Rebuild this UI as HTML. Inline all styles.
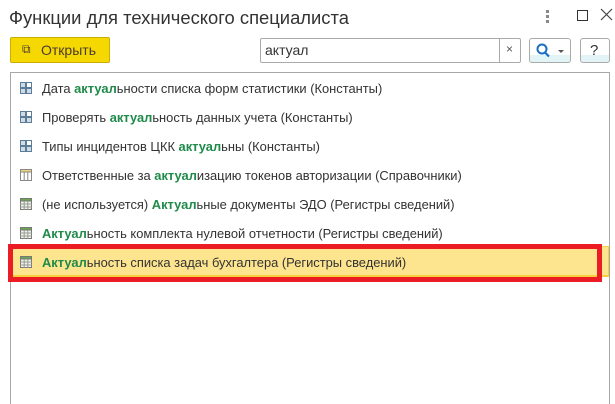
<!DOCTYPE html>
<html><head><meta charset="utf-8"><style>
html,body{margin:0;width:615px;height:404px;overflow:hidden}
body{background:#fff;font-family:"Liberation Sans",sans-serif;position:relative;color:#333}
.a{position:absolute}
.t{font-size:18.4px;left:9px;top:7px;color:#333}
.btn{left:10px;top:37px;width:98px;height:24px;background:#f5d800;border:1px solid #c9ad00;border-radius:2px;font-size:14px;color:#4a3b30}
.inp{left:260px;top:38px;width:259px;height:23px;border:1px solid #aaa;border-radius:2px;font-size:14px}
.sb{top:38px;height:23px;border:1px solid #aaa;border-radius:3px;background:linear-gradient(#fff 70%,#e3f4f6 70%)}
.list{left:10px;top:72px;width:598px;height:332px;border:1px solid #a8a8a8;border-bottom:none}
.row{position:absolute;left:42px;font-size:12.9px;color:#333;white-space:nowrap}
.row b{color:#1f8a4a}
.ic{position:absolute;left:20px;width:12px;height:12px}
</style></head><body>
<div class="a t">Функции для технического специалиста</div>
<div class="a" style="left:546px;top:10px;width:3px;height:13px;background:repeating-linear-gradient(#888 0 3px,transparent 3px 5px)"></div>
<div class="a" style="left:577px;top:10px;width:9px;height:9px;border:1px solid #333"></div>
<svg class="a" style="left:600px;top:8px" width="13" height="13"><path d="M1 1L12 12M12 1L1 12" stroke="#444" stroke-width="1.2"/></svg>
<div class="a btn"><span style="position:absolute;left:11px;top:4px;font-size:12px">⧉</span><span style="position:absolute;left:30px;top:4px">Открыть</span></div>
<div class="a inp"><span style="position:absolute;left:4px;top:3px">актуал</span><div style="position:absolute;left:238px;top:0;width:1px;height:23px;background:#aaa"></div><span style="position:absolute;left:245px;top:3px;font-size:12px;color:#555">×</span></div>
<div class="a sb" style="left:529px;width:40px"><svg width="40" height="23" style="position:absolute;left:0;top:0"><circle cx="12" cy="10" r="4.5" fill="none" stroke="#1a6fc4" stroke-width="2"/><line x1="15" y1="13.5" x2="19" y2="17.5" stroke="#1a6fc4" stroke-width="2.2"/><path d="M28 11 h6 l-3 3z" fill="#555"/></svg></div>
<div class="a sb" style="left:580px;width:28px"><span style="position:absolute;left:9px;top:3px;font-size:15px;color:#333">?</span></div>
<div class="a list"></div>
<div class="a" style="left:10px;top:246px;width:597px;height:28px;background:#fde48f;border:1px solid #f6cf3b;border-bottom-width:2px"></div>
<div class="a" style="left:8px;top:244px;width:584px;height:28px;border:5px solid #ec1c24"></div>
<svg class="ic" style="top:82px" viewBox="0 0 12 12"><rect x="0.5" y="0.5" width="5" height="5" fill="#cfdbe5" stroke="#5b7d99"/><rect x="6.5" y="0.5" width="5" height="5" fill="#fff" stroke="#5b7d99"/><rect x="0.5" y="6.5" width="5" height="5" fill="#cfdbe5" stroke="#5b7d99"/><rect x="6.5" y="6.5" width="5" height="5" fill="#cfdbe5" stroke="#5b7d99"/></svg>
<svg class="ic" style="top:111px" viewBox="0 0 12 12"><rect x="0.5" y="0.5" width="5" height="5" fill="#cfdbe5" stroke="#5b7d99"/><rect x="6.5" y="0.5" width="5" height="5" fill="#fff" stroke="#5b7d99"/><rect x="0.5" y="6.5" width="5" height="5" fill="#cfdbe5" stroke="#5b7d99"/><rect x="6.5" y="6.5" width="5" height="5" fill="#cfdbe5" stroke="#5b7d99"/></svg>
<svg class="ic" style="top:140px" viewBox="0 0 12 12"><rect x="0.5" y="0.5" width="5" height="5" fill="#cfdbe5" stroke="#5b7d99"/><rect x="6.5" y="0.5" width="5" height="5" fill="#fff" stroke="#5b7d99"/><rect x="0.5" y="6.5" width="5" height="5" fill="#cfdbe5" stroke="#5b7d99"/><rect x="6.5" y="6.5" width="5" height="5" fill="#cfdbe5" stroke="#5b7d99"/></svg>
<svg class="ic" style="top:169px" viewBox="0 0 12 12"><rect x="0.5" y="0.5" width="11" height="11" fill="#fff" stroke="#888"/><rect x="0.5" y="0.5" width="11" height="2.5" fill="#f1d57a" stroke="#888"/><path d="M4.2 3v9M7.8 3v9" stroke="#888"/></svg>
<svg class="ic" style="top:198px" viewBox="0 0 12 12"><rect x="0.5" y="0.5" width="11" height="11" fill="#eef3e6" stroke="#777"/><rect x="0.5" y="0.5" width="11" height="2.5" fill="#6aa84f" stroke="#777"/><path d="M0 6h12M0 9h12M4.2 3v9M7.8 3v9" stroke="#999"/></svg>
<svg class="ic" style="top:227px" viewBox="0 0 12 12"><rect x="0.5" y="0.5" width="11" height="11" fill="#eef3e6" stroke="#777"/><rect x="0.5" y="0.5" width="11" height="2.5" fill="#6aa84f" stroke="#777"/><path d="M0 6h12M0 9h12M4.2 3v9M7.8 3v9" stroke="#999"/></svg>
<svg class="ic" style="top:256px" viewBox="0 0 12 12"><rect x="0.5" y="0.5" width="11" height="11" fill="#eef3e6" stroke="#777"/><rect x="0.5" y="0.5" width="11" height="2.5" fill="#6aa84f" stroke="#777"/><path d="M0 6h12M0 9h12M4.2 3v9M7.8 3v9" stroke="#999"/></svg>
<div class="row" style="top:81px">Дата <b>актуал</b>ьности списка форм статистики (Константы)</div>
<div class="row" style="top:110px">Проверять <b>актуал</b>ьность данных учета (Константы)</div>
<div class="row" style="top:139px">Типы инцидентов ЦКК <b>актуал</b>ьны (Константы)</div>
<div class="row" style="top:168px">Ответственные за <b>актуал</b>изацию токенов авторизации (Справочники)</div>
<div class="row" style="top:197px">(не используется) <b>Актуал</b>ьные документы ЭДО (Регистры сведений)</div>
<div class="row" style="top:226px"><b>Актуал</b>ьность комплекта нулевой отчетности (Регистры сведений)</div>
<div class="row" style="top:255px"><b>Актуал</b>ьность списка задач бухгалтера (Регистры сведений)</div>
</body></html>
